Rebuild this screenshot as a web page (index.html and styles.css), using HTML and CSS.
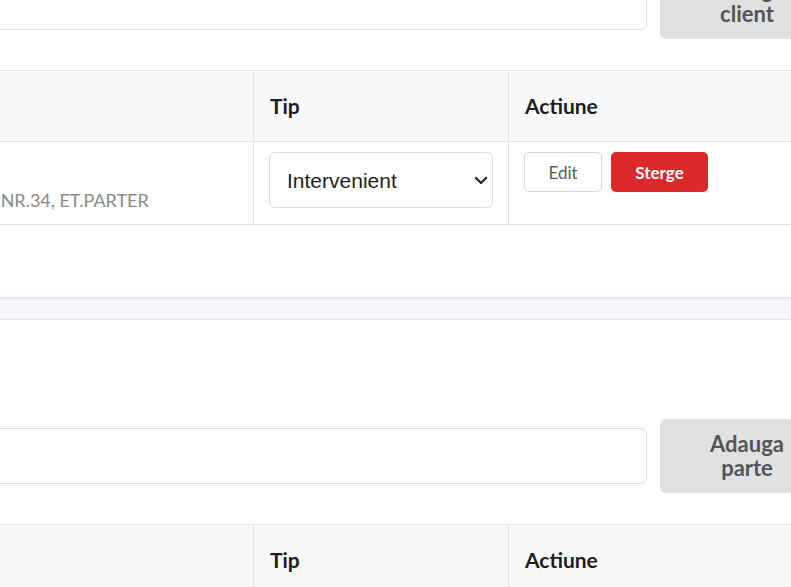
FILE: index.html
```html
<!DOCTYPE html>
<html lang="ro">
<head>
<meta charset="utf-8">
<title>Clienti si parti</title>
<link rel="stylesheet" href="styles.css">
</head>
<body>
<div class="page">
  <section class="card">
    <h2 class="card-title">Clienti</h2>
    <div class="form-row">
      <input class="text-input" type="text" aria-label="Client">
      <button class="btn-add">Adauga<br>client</button>
    </div>
    <table class="grid">
      <colgroup><col class="c-name"><col class="c-type"><col class="c-act"></colgroup>
      <thead>
        <tr><th>Nume</th><th>Tip</th><th>Actiune</th></tr>
      </thead>
      <tbody>
        <tr>
          <td>
            <div class="name">POPESCU ION</div>
            <div class="addr">BUCURESTI, SECTOR 3, STR. LIBERTATII NR.34, ET.PARTER</div>
          </td>
          <td>
            <div class="select-wrap">
              <select class="select"><option>Intervenient</option></select>
              <svg class="chev" width="14" height="9" viewBox="0 0 14 9"><path d="M1.8 1.8 L7 7 L12.2 1.8" fill="none" stroke="#222" stroke-width="2.1" stroke-linecap="round" stroke-linejoin="round"/></svg>
            </div>
          </td>
          <td>
            <div class="actions">
              <button class="btn-edit">Edit</button>
              <button class="btn-del">Sterge</button>
            </div>
          </td>
        </tr>
      </tbody>
    </table>
  </section>

  <section class="card">
    <h2 class="card-title">Parti</h2>
    <div class="form-row">
      <input class="text-input" type="text" aria-label="Parte">
      <button class="btn-add">Adauga<br>parte</button>
    </div>
    <table class="grid">
      <colgroup><col class="c-name"><col class="c-type"><col class="c-act"></colgroup>
      <thead>
        <tr><th>Nume</th><th>Tip</th><th>Actiune</th></tr>
      </thead>
    </table>
  </section>
</div>
</body>
</html>
```

FILE: styles.css
```css
html, body {
  margin: 0;
  padding: 0;
  background: #f7f8fb;
  font-family: Lato, "Open Sans", sans-serif;
  color: #222;
  overflow: hidden;
}

.page {
  margin: -135px 0 0 -371px;
  width: 1230px;
}

.card {
  background: #fff;
  border: 1px solid #e1e2e6;
  box-shadow: 0 1px 3px rgba(0, 0, 0, 0.08);
  padding: 24px 24px 72px;
  margin-bottom: 21px;
}

.card-title {
  margin: 0 0 39px;
  font-size: 24px;
  line-height: 36px;
  font-weight: 700;
}

.form-row {
  display: flex;
  align-items: center;
  gap: 13px;
}

.text-input {
  flex: 1;
  height: 56px;
  box-sizing: border-box;
  border: 1px solid #dedede;
  border-radius: 6px;
  background: #fff;
  font: 18px Lato, sans-serif;
  padding: 0 16px;
}

.btn-add {
  width: 174px;
  height: 74px;
  border: 0;
  border-radius: 6px;
  background: #e0e1e3;
  color: #555;
  font: 700 22px/24px Lato, sans-serif;
  padding: 0;
}

.grid {
  width: 100%;
  margin-top: 31px;
  border-collapse: collapse;
  table-layout: fixed;
}

.c-name { width: 599px; }
.c-type { width: 255px; }

.grid th {
  background: #f8f9fa;
  border: 1px solid #e3e3e3;
  padding: 20px 16px;
  font-size: 21px;
  line-height: 30px;
  font-weight: 700;
  text-align: left;
  color: #1d1d1d;
}

.grid td {
  border: 1px solid #e3e3e3;
  padding: 10px 15px 12px;
  vertical-align: top;
}

.name {
  font-size: 16px;
  line-height: 24px;
  font-weight: 700;
  white-space: nowrap;
}

.addr {
  margin-top: 12px;
  font-size: 18px;
  line-height: 24px;
  color: #8a8a8a;
  white-space: nowrap;
}

.select-wrap {
  position: relative;
}

.select {
  appearance: none;
  -webkit-appearance: none;
  width: 100%;
  height: 56px;
  box-sizing: border-box;
  border: 1px solid #dcdcdc;
  border-radius: 6px;
  background: #fff;
  color: #1e1e1e;
  font: 21px "Liberation Sans", Arial, sans-serif;
  padding: 0 30px 0 17px;
}

.chev {
  position: absolute;
  right: 5px;
  top: 24px;
  pointer-events: none;
}

.actions {
  display: flex;
  gap: 9px;
}

.btn-edit {
  width: 78px;
  height: 40px;
  border: 1px solid #d9d9d9;
  border-radius: 5px;
  background: #fff;
  color: #5a5a5a;
  font: 17px Lato, sans-serif;
}

.btn-del {
  width: 97px;
  height: 40px;
  border: 0;
  border-radius: 5px;
  background: #dc2828;
  color: #fff;
  font: 700 17px Lato, sans-serif;
}
```
